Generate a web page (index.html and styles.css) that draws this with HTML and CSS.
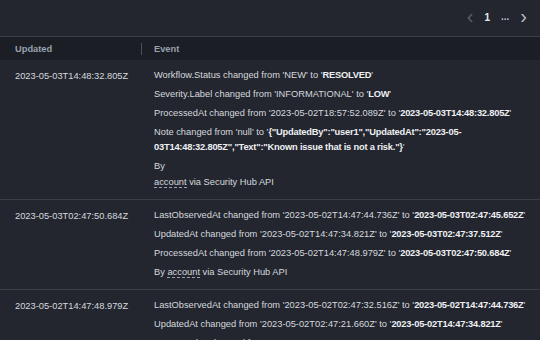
FILE: index.html
```html
<!DOCTYPE html>
<html lang="en">
<head>
    <meta charset="UTF-8">
    <title>Finding history</title>
    <link rel="stylesheet" href="styles.css">
</head>
<body>
    <div class="toolbar">
        <div class="pager">
            <span class="pager-arrow disabled">&#8249;</span>
            <span class="pager-page">1</span>
            <span class="pager-dots">...</span>
            <span class="pager-arrow">&#8250;</span>
        </div>
    </div>

    <div class="history">
        <div class="history-head">
            <div class="col-date">Updated</div>
            <div class="col-event">Event</div>
        </div>

        <div class="history-row">
            <div class="col-date">2023-05-03T14:48:32.805Z</div>
            <div class="col-event">
                <p>Workflow.Status changed from 'NEW' to '<b>RESOLVED</b>'</p>
                <p>Severity.Label changed from 'INFORMATIONAL' to '<b>LOW</b>'</p>
                <p>ProcessedAt changed from '2023-05-02T18:57:52.089Z' to '<b>2023-05-03T14:48:32.805Z</b>'</p>
                <p>Note changed from 'null' to '<b>{"UpdatedBy":"user1","UpdatedAt":"2023-05-<br>03T14:48:32.805Z","Text":"Known issue that is not a risk."}</b>'</p>
                <p class="by-line">By</p>
                <p><span class="account">account</span> via Security Hub API</p>
            </div>
        </div>

        <div class="history-row">
            <div class="col-date">2023-05-03T02:47:50.684Z</div>
            <div class="col-event">
                <p>LastObservedAt changed from '2023-05-02T14:47:44.736Z' to '<b>2023-05-03T02:47:45.652Z</b>'</p>
                <p>UpdatedAt changed from '2023-05-02T14:47:34.821Z' to '<b>2023-05-03T02:47:37.512Z</b>'</p>
                <p>ProcessedAt changed from '2023-05-02T14:47:48.979Z' to '<b>2023-05-03T02:47:50.684Z</b>'</p>
                <p>By <span class="account">account</span> via Security Hub API</p>
            </div>
        </div>

        <div class="history-row">
            <div class="col-date">2023-05-02T14:47:48.979Z</div>
            <div class="col-event">
                <p>LastObservedAt changed from '2023-05-02T02:47:32.516Z' to '<b>2023-05-02T14:47:44.736Z</b>'</p>
                <p>UpdatedAt changed from '2023-05-02T02:47:21.660Z' to '<b>2023-05-02T14:47:34.821Z</b>'</p>
                <p>ProcessedAt changed from '2023-05-02T02:47:48.979Z' to '<b>2023-05-02T14:47:48.979Z</b>'</p>
            </div>
        </div>
    </div>
</body>
</html>
```

FILE: styles.css
```css
* {
    margin: 0;
    padding: 0;
    box-sizing: border-box;
}

body {
    font-family: 'Liberation Sans', Arial, sans-serif;
    font-size: 9.3px;
    background-color: #23262e;
    color: #d5d9df;
    height: 340px;
    overflow: hidden;
}

.toolbar {
    height: 37px;
    border-bottom: 1px solid #3a3e47;
    display: flex;
    justify-content: flex-end;
    align-items: center;
    padding-right: 13px;
}

.pager {
    display: flex;
    align-items: center;
    gap: 11px;
    margin-top: -1px;
}

.pager-arrow {
    font-size: 20px;
    line-height: 1;
    color: #b9bec6;
    margin-top: -3px;
}

.pager-arrow.disabled {
    color: #5b6069;
}

.pager-page {
    font-weight: bold;
    font-size: 10px;
    color: #e8eaee;
}

.pager-dots {
    font-weight: bold;
    font-size: 10px;
    color: #b9bec6;
    margin-top: -2px;
}

.history-head {
    display: flex;
    height: 23px;
    align-items: center;
    background-color: #1b1e25;
    color: #97a2ae;
    font-weight: bold;
}

.history-head .col-date {
    border-right: 1px solid #4a4f58;
    height: 12px;
    line-height: 12px;
}

.history-head .col-event {
    line-height: 12px;
}

.col-date {
    width: 142px;
    padding-left: 15px;
    flex-shrink: 0;
}

.col-event {
    flex: 1;
    padding-left: 12px;
}

.history-row {
    display: flex;
    padding: 8px 0 9px;
    border-bottom: 1px solid #3a3e47;
    line-height: 15px;
}

.history-row .col-date {
    padding-top: 1px;
}

.history-row p {
    margin-bottom: 4px;
    white-space: nowrap;
}

.history-row p:last-child {
    margin-bottom: 0;
}

.history-row p.by-line {
    margin-bottom: 1px;
}

b {
    color: #eef0f3;
    letter-spacing: -0.2px;
}

.account {
    border-bottom: 1px dashed #9aa3ad;
}
```
